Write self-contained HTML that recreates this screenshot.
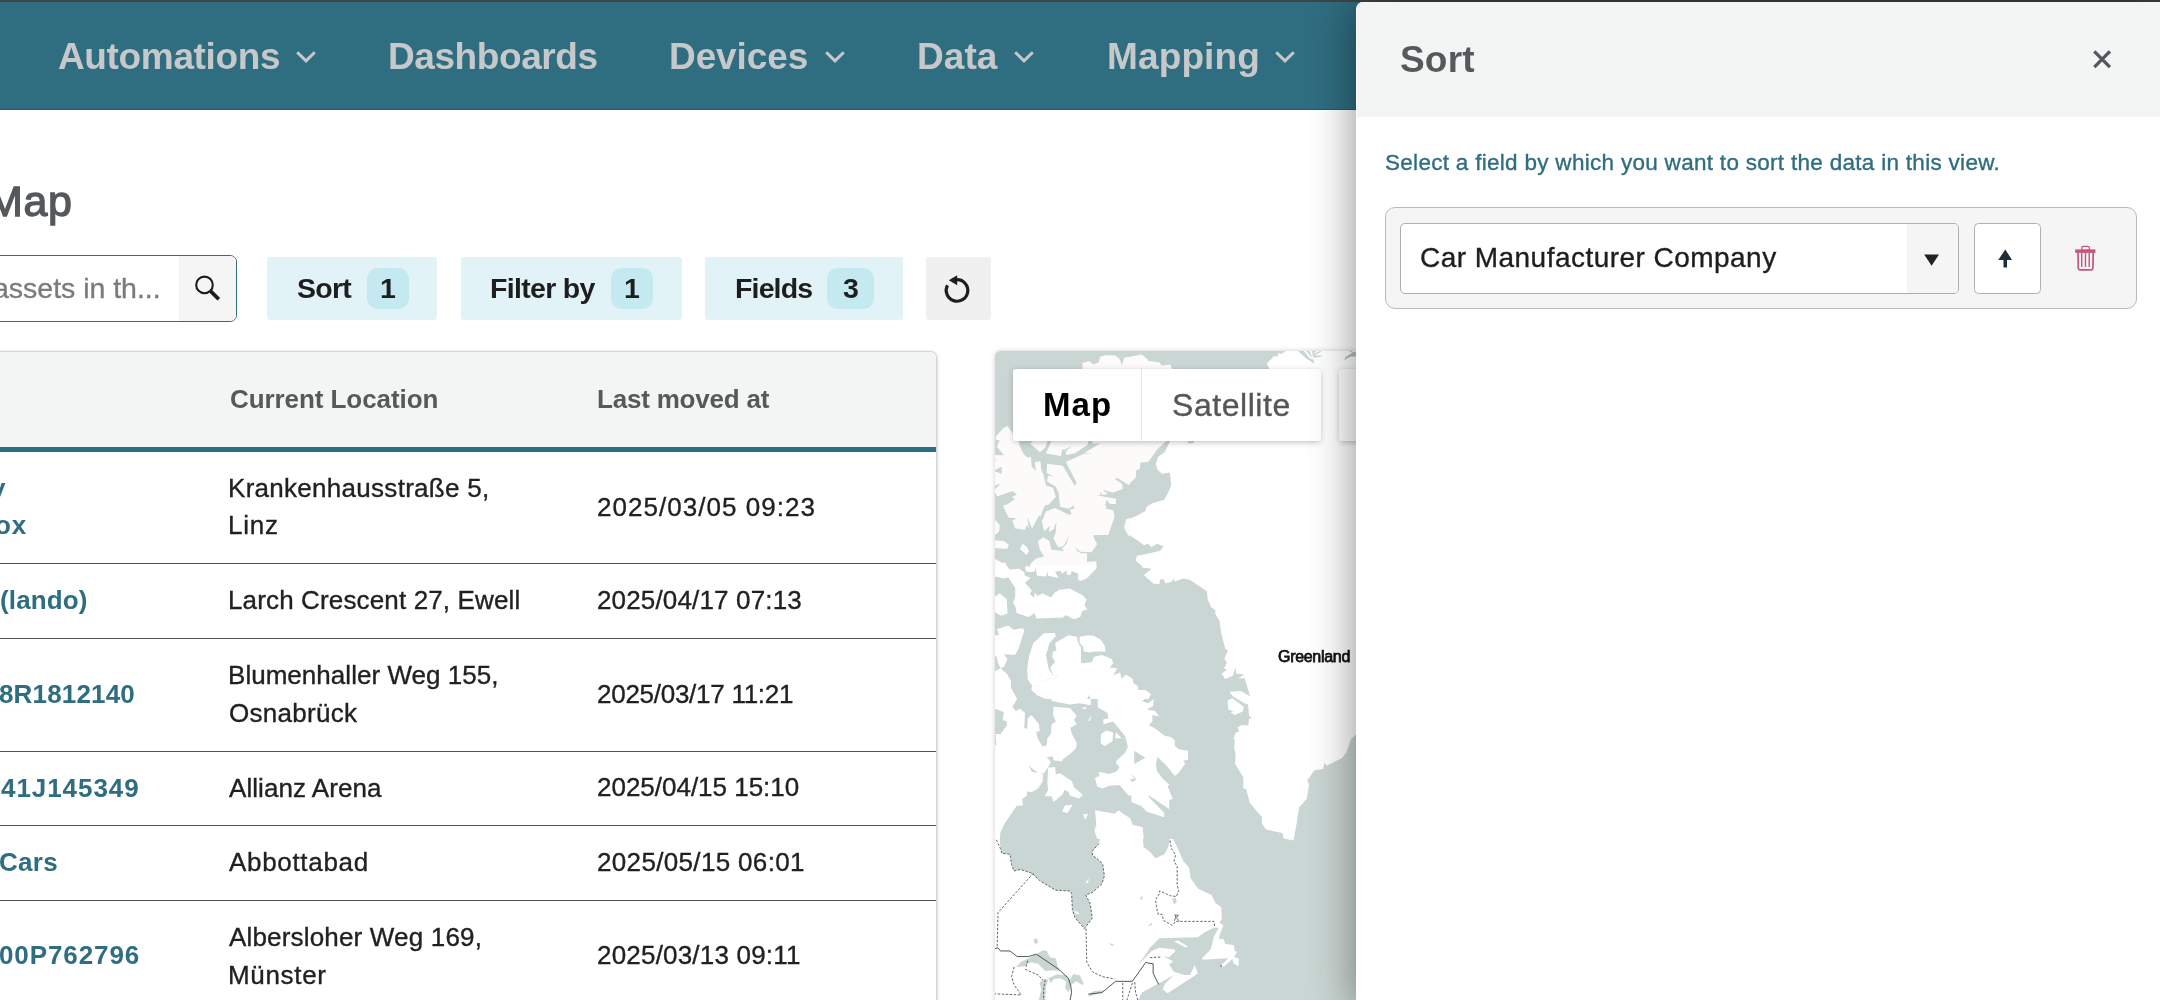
<!DOCTYPE html>
<html>
<head>
<meta charset="utf-8">
<title>Map</title>
<style>
*{box-sizing:border-box;margin:0;padding:0}
html,body{width:2160px;height:1000px;overflow:hidden;background:#fff;font-family:"Liberation Sans",sans-serif;}
body{position:relative}
.abs{position:absolute}
.t{position:absolute;white-space:pre;line-height:1;will-change:transform}
#topbar{left:0;top:0;width:2160px;height:2px;background:#3f4447}
#nav{left:0;top:2px;width:2160px;height:108px;background:#2f6d80;border-bottom:1px solid #1f5c6e}
.chev{position:absolute;width:22px;height:16px}
#search{left:-40px;top:255px;width:277px;height:67px;border:1.4px solid #2f6d80;border-radius:7px;background:#fff;overflow:hidden}
#searchbtn{left:217.5px;top:0;width:58px;height:66px;background:#f5f5f5}
.btn{position:absolute;top:257px;height:63px;background:#e2f3f8;border-radius:3px}
.badge{position:absolute;top:11px;height:41px;background:#c5e9f1;border-radius:11px}
#table{left:-10px;top:351px;width:946.8px;height:700px;border:1px solid #d4d6d6;border-radius:0 7px 0 0;background:#fff;box-shadow:1px 0 3px rgba(0,0,0,.13);overflow:hidden}
#thead{left:0;top:0;width:947px;height:96px;background:#f3f5f5}
#tline{left:0;top:95.3px;width:947px;height:4.4px;background:#2f6d80}
.hr{position:absolute;left:0;width:947px;height:1.2px;background:#505354}
#map{left:994.6px;top:351.2px;width:420px;height:660px;background:#cad6d3;border-radius:6px 0 0 0;overflow:hidden;box-shadow:0 0 5px rgba(0,0,0,.2)}
#mapedge{display:none}
#mapctl{left:1013px;top:369px;width:308px;height:71.5px;background:#fff;border-radius:3px;box-shadow:0 1.5px 6px -1px rgba(0,0,0,.28)}
#mapctl2{left:1339px;top:369px;width:80px;height:71.5px;background:#fff;border-radius:3px;box-shadow:0 1.5px 6px -1px rgba(0,0,0,.28)}
#mapdiv{left:1140.5px;top:369px;width:1.5px;height:71.5px;background:#e6e6e6}
#panel{left:1356px;top:2px;width:820px;height:1010px;background:#fff;border-radius:7px 0 0 0;box-shadow:0 0 46px rgba(0,0,0,.45);border-left:1px solid #fff}
#phead{left:0;top:0;width:820px;height:114.7px;background:#f3f5f5;border-radius:6px 0 0 0}
#card{left:1385px;top:207px;width:752px;height:102px;background:#f5f5f5;border:1.2px solid #b9b9b9;border-radius:10px}
#sel{left:1400px;top:223px;width:559px;height:71px;background:#fff;border:1px solid #aeaeae;border-radius:5px;overflow:hidden}
#selarrow{left:506px;top:0;width:53px;height:70px;background:#f5f5f5}
#upbtn{left:1974px;top:223px;width:67px;height:71px;background:#fff;border:1px solid #b0b0b0;border-radius:4.5px}
</style>
</head>
<body>
<div id="nav" class="abs">
  <svg class="chev" style="left:294.6px;top:46.7px" viewBox="0 0 22 16"><path d="M2.2 3.2 L11 11.9 L19.8 3.2" fill="none" stroke="#c6c8ca" stroke-width="3"/></svg>
  <svg class="chev" style="left:824.1px;top:46.7px" viewBox="0 0 22 16"><path d="M2.2 3.2 L11 11.9 L19.8 3.2" fill="none" stroke="#c6c8ca" stroke-width="3"/></svg>
  <svg class="chev" style="left:1013.1px;top:46.7px" viewBox="0 0 22 16"><path d="M2.2 3.2 L11 11.9 L19.8 3.2" fill="none" stroke="#c6c8ca" stroke-width="3"/></svg>
  <svg class="chev" style="left:1274.1px;top:46.7px" viewBox="0 0 22 16"><path d="M2.2 3.2 L11 11.9 L19.8 3.2" fill="none" stroke="#c6c8ca" stroke-width="3"/></svg>
</div>
<div id="topbar" class="abs"></div>

<div id="search" class="abs">
  <div id="searchbtn" class="abs">
    <svg class="abs" style="left:14px;top:17px" width="34" height="34" viewBox="0 0 34 34"><circle cx="11.5" cy="11.9" r="8.3" fill="none" stroke="#1c1c1c" stroke-width="2.1"/><path d="M17.6 18.1 L25.8 26.3" stroke="#1c1c1c" stroke-width="3.7"/></svg>
  </div>
</div>

<div class="btn" style="left:267px;width:170px"><div class="badge" style="left:100px;width:42px"></div></div>
<div class="btn" style="left:461px;width:221px"><div class="badge" style="left:150px;width:42px"></div></div>
<div class="btn" style="left:705px;width:198px"><div class="badge" style="left:122px;width:47px"></div></div>
<div class="btn" style="left:926.2px;width:64.6px;background:#f0f0f0">
  <svg class="abs" style="left:14.4px;top:15px" width="32" height="34" viewBox="0 0 32 34"><path d="M16 7.6 A10.8 10.8 0 1 1 6.46 13.33" fill="none" stroke="#1e1e1e" stroke-width="3.2"/><path d="M7.8 8.2 L16.2 3.2 L16.2 13.2 Z" fill="#1e1e1e"/></svg>
</div>

<div id="table" class="abs">
  <div id="thead" class="abs"></div>
  <div id="tline" class="abs"></div>
  <div class="hr" style="top:210.9px"></div>
  <div class="hr" style="top:285.9px"></div>
  <div class="hr" style="top:398.9px"></div>
  <div class="hr" style="top:472.7px"></div>
  <div class="hr" style="top:547.9px"></div>
</div>

<div id="map" class="abs"><svg class="abs" style="left:0;top:0" width="420" height="660" viewBox="0 0 420 660"><clipPath id="c1"><rect x="0" y="0" width="405" height="89"/></clipPath><g clip-path="url(#c1)"><rect x="0" y="0" width="405" height="89" fill="#cad6d3"/><g transform="translate(-5,-2) scale(0.21997)"><polygon points="420,100 420,65 450,55 470,70 495,60 500,35 520,28 570,30 590,45 600,75 610,40 690,25 715,45 720,55 770,60 780,75 820,70 830,100" fill="#fcfbfa" /><polygon points="1258,100 1258,65 1285,42 1310,35 1335,8 1345,0 1700,0 1700,420 1258,420" fill="#ffffff" /><polyline points="1395,8 1440,35 1480,50" fill="none" stroke="#cad6d3" stroke-width="8"/><polyline points="1500,8 1455,30 1425,28" fill="none" stroke="#cad6d3" stroke-width="6"/><polyline points="1440,8 1470,40" fill="none" stroke="#cad6d3" stroke-width="5"/><polyline points="1612,45 1665,18" fill="none" stroke="#cad6d3" stroke-width="7"/><polygon points="60,360 80,350 105,385 110,420 30,420 25,400" fill="#fcfbfa" /></g></g><clipPath id="c2"><rect x="135" y="89" width="132" height="125"/></clipPath><g clip-path="url(#c2)"><rect x="135" y="89" width="132" height="125" fill="#ffffff"/><g transform="translate(-5,78) scale(0.13998)"><polygon points="690,-20 1300,-20 1290,60 1200,140 1130,235 1075,240 1070,285 1045,295 1040,350 990,395 945,380 890,352 945,395 950,425 885,455 830,440 790,440 800,470 760,475 900,495 900,540 830,510 830,570 880,575 890,620 840,755 740,760 765,820 730,880 695,885 695,945 760,950 765,1010 690,1010" fill="#fcfbfa" /><polygon points="1290,60 1200,140 1130,235 1075,240 1070,285 1045,295 1040,350 990,395 945,380 890,352 945,395 950,425 885,455 830,440 790,440 800,470 760,475 900,495 900,540 830,510 830,570 880,575 890,620 840,755 740,760 765,820 730,880 695,885 695,945 760,950 765,1010 1150,1010 1080,975 1040,940 1050,905 1110,895 1215,870 1240,840 1195,820 1150,845 1130,820 1100,830 1060,800 1000,760 960,710 970,650 1050,620 1110,585 1120,555 1160,530 1245,505 1280,440 1295,400 1285,310 1230,320 1195,290 1185,250 1200,200 1250,165 1280,100 1300,60" fill="#cad6d3" /><polygon points="1405,78 1460,78 1455,100 1420,105" fill="#cad6d3" /></g></g><clipPath id="c3"><rect x="0" y="89" width="135" height="65"/></clipPath><g clip-path="url(#c3)"><rect x="0" y="89" width="135" height="65" fill="#fcfbfa"/><g transform="translate(-5,84) scale(0.07000)"><polygon points="405,60 630,60 575,125 715,245 790,180 830,60 885,60 850,150 795,265 1015,300 1030,200 1065,215 1170,150 1085,235 1085,285 1210,265 1395,135 1410,60 1440,60 1475,125 1580,115 1355,255 1480,275 1350,265 1085,385 1240,690 1210,725 1040,440 815,410 810,540 910,595 830,580 815,660 935,735 980,820 1000,1010 820,1010 940,885 900,755 800,720 770,590 730,480 720,375 640,390 655,515 595,450 585,310 535,325 480,270 430,170" fill="#cad6d3" /><polygon points="70,-10 280,-10 260,30 215,50 150,35 100,170 200,290 70,285" fill="#cad6d3" /><polygon points="70,350 85,355 70,380" fill="#cad6d3" /><polygon points="70,500 165,455 170,555 70,520" fill="#cad6d3" /><polygon points="70,720 150,700 70,775" fill="#cad6d3" /><polygon points="70,810 100,880 320,800 385,850 310,890 360,915 215,1010 70,1010" fill="#cad6d3" /><polygon points="2010,700 1975,710 1820,615 1780,625 1890,700 1895,770 1750,825 1640,790 1610,795 1680,830 1660,850 1600,855 1580,800 1575,860 1515,862 1800,910 1800,985 1715,985 1660,930 1655,990 1560,1010 2010,1010" fill="#cad6d3" /></g></g><clipPath id="c4"><rect x="0" y="154" width="135" height="60"/></clipPath><g clip-path="url(#c4)"><rect x="0" y="154" width="135" height="60" fill="#fcfbfa"/><g transform="translate(-5,148) scale(0.07000)"><polygon points="910,-10 990,-10 1000,110 1130,140 1190,90 1210,135 1140,150 1165,210 1130,230 935,130 800,180 740,320 775,460 855,385 840,475 910,430 950,320 940,480 905,560 975,690 1040,680 1080,625 1130,510 1095,640 1050,690 1025,710 1060,745 875,720 850,600 760,545 685,605 710,720 775,820 660,850 580,920 570,1010 560,960 520,945 490,1010 270,1010 215,905 185,915 70,855 70,700 245,715 270,655 200,600 70,590 70,520 130,460 140,370 70,295 70,-10 360,-10 185,100 265,265 380,275 320,310 360,420 500,440 525,370 555,420 530,250 545,290 600,420 700,235 720,250 770,120 780,100" fill="#cad6d3" /><polygon points="430,715 465,640 530,690 555,750 520,800" fill="#ffffff" /><polygon points="1800,-10 2010,-10 2010,270 1945,290 1915,410 1975,520 2010,530 2010,1010 1520,1010 1520,890 1385,895 1385,775 1300,775 1250,745 1215,690 1290,755 1450,760 1530,645 1480,545 1485,515 1690,515 1780,250 1760,160 1655,140 1660,20 1740,75 1795,70" fill="#cad6d3" /><polygon points="1530,70 1660,62 1655,88 1530,80" fill="#cad6d3" /></g></g><clipPath id="c5"><rect x="0" y="214" width="267" height="134"/></clipPath><g clip-path="url(#c5)"><rect x="0" y="214" width="267" height="134" fill="#cad6d3"/><g transform="translate(-5,208) scale(0.13998)"><polygon points="35,10 100,25 140,75 205,70 245,95 250,120 290,135 250,170 300,225 285,250 315,275 320,240 340,265 375,245 435,275 465,240 495,220 570,210 665,260 690,290 675,330 695,360 660,370 645,415 600,430 540,400 520,420 470,420 330,425 320,385 275,415 190,385 180,335 165,315 180,270 180,205 130,130 100,140 35,125" fill="#ffffff" /><polygon points="285,-10 285,60 265,45 250,60 255,85 280,95 320,90 325,55 335,120 400,125 410,90 415,120 490,135 465,90 505,85 515,105 545,80 550,110 575,115 585,85 630,105 630,150 650,157 690,140 760,70 765,20 700,15 695,-10" fill="#ffffff" /><polygon points="35,270 70,245 120,290 125,390 80,405 35,380" fill="#ffffff" /><polygon points="35,545 65,545 50,500 130,475 170,505 235,495 245,510 205,640 180,685 100,680 125,715 100,770 75,780 55,740 50,700 35,690" fill="#ffffff" /><polygon points="35,800 75,780 120,820 150,870 150,920 200,1010 35,1010" fill="#ffffff" /><polygon points="385,530 465,528 470,550 425,600 400,690 420,790 450,830 485,825 480,855 455,850 350,875 350,910 300,905 270,860 265,790 280,690 310,600" fill="#ffffff" /><polygon points="465,600 560,545 620,555 630,600 650,630 650,740 665,745 730,735 740,700 800,685 870,715 880,745 855,775 910,780 880,830 930,810 940,855 970,825 1020,855 1025,890 1055,905 1060,935 1110,935 1150,965 1130,1010 720,1010 710,970 690,1010 420,1010 340,975 295,935 300,905 350,910 350,875 455,850 480,855 485,825 450,830 430,775 465,735 445,700 450,660 475,655" fill="#ffffff" /><polygon points="640,555 700,545 740,548 790,575 820,620 825,660 740,660 715,668 670,660 665,625 640,600" fill="#ffffff" /><polygon points="1035,-10 1050,40 1080,25 1085,60 1155,70 1100,115 1165,175 1210,180 1215,145 1240,145 1255,175 1300,160 1310,140 1320,160 1380,140 1430,150 1550,230 1555,290 1580,345 1610,365 1610,395 1640,440 1650,520 1670,600 1680,640 1700,655 1670,720 1690,745 1665,790 1690,790 1655,820 1680,855 1730,835 1755,780 1760,830 1815,825 1775,850 1820,850 1860,985 1790,965 1715,950 1740,985 1800,1010 1950,1010 1950,-10" fill="#ffffff" /></g></g><clipPath id="c6"><rect x="0" y="348" width="267" height="140"/></clipPath><g clip-path="url(#c6)"><rect x="0" y="348" width="267" height="140" fill="#cad6d3"/><g transform="translate(-5,348) scale(0.13998)"><polygon points="35,-10 200,-10 160,55 185,85 215,70 250,100 245,205 265,215 270,140 295,115 350,180 355,230 330,235 340,280 375,340 405,330 410,280 435,250 440,180 470,160 450,110 455,55 570,65 620,120 600,150 620,180 575,205 585,250 620,315 615,350 570,395 520,430 515,445 455,440 450,410 405,415 435,450 410,495 385,530 345,530 275,475 300,520 380,535 375,590 345,640 300,665 265,660 265,690 230,715 235,760 190,765 110,880 75,950 70,1010 35,1010" fill="#ffffff" /><polygon points="35,70 100,95 90,150 120,160 120,190 75,250 40,250 45,330 35,330" fill="#cad6d3" /><polygon points="185,95 185,135 155,135" fill="#ffffff" /><polygon points="415,490 465,485 470,540 500,530 585,585 600,630 665,685 635,710 570,690 560,660 530,650 520,680 455,735 440,695 390,695 415,650 410,600" fill="#ffffff" /><polygon points="535,760 590,755 555,815 515,805" fill="#ffffff" /><polygon points="665,825 700,820 680,865" fill="#ffffff" /><polygon points="440,-10 440,15 570,40 640,30 720,45 720,-10" fill="#ffffff" /><polygon points="650,60 690,60 680,75" fill="#ffffff" /><polygon points="770,-10 770,60 840,100 845,140 810,145 810,180 880,160 965,265 985,340 965,385 905,440 900,455 925,490 900,520 850,535 780,520 780,550 750,565 765,625 805,640 850,620 925,615 990,690 1010,690 1010,735 1080,765 1120,805 1245,845 1245,815 1130,695 1135,690 1280,785 1280,720 1305,715 1270,625 1280,610 1230,565 1195,520 1185,475 1195,415 1260,475 1320,550 1350,525 1395,460 1380,440 1415,435 1415,370 1355,360 1320,335 1320,295 1290,270 1250,265 1185,215 1135,185 1160,160 1160,115 1210,125 1180,85 1120,75 1165,50 1170,0 1130,30 1085,15 1120,-10" fill="#ffffff" /><polygon points="1030,370 1110,420 1030,465" fill="#cad6d3" /><polygon points="1010,530 1045,575 1015,595 1000,575 1030,570" fill="#cad6d3" /><polygon points="795,250 830,225 880,240 875,300 820,337 790,315" fill="#ffffff" /><polygon points="900,235 940,280 895,280" fill="#ffffff" /><polygon points="725,115 715,155 700,155" fill="#ffffff" /><polygon points="750,795 890,820 920,795 950,820 1000,850 1020,900 1090,915 1100,1010 770,1010 745,940 760,900" fill="#ffffff" /><polygon points="1950,-10 1870,-10 1870,35 1850,30 1860,80 1845,190 1775,205 1780,235 1750,250 1745,350 1755,395 1750,460 1810,560 1810,640 1830,645 1855,740 1895,790 1950,850" fill="#ffffff" /><polygon points="1700,-10 1760,-5 1815,45 1810,90 1745,115 1700,70" fill="#ffffff" /></g></g><clipPath id="c7"><rect x="0" y="488" width="267" height="161"/></clipPath><g clip-path="url(#c7)"><rect x="0" y="488" width="267" height="161" fill="#ffffff"/><g transform="translate(-5,488) scale(0.15995)"><polygon points="60,-10 65,60 75,90 125,95 135,160 150,200 190,190 265,215 310,260 410,320 500,325 510,340 515,440 530,490 590,560 640,495 625,400 598,350 640,335 700,280 715,230 705,160 690,140 640,100 640,75 680,30 690,-10" fill="#cad6d3" /><polygon points="598,275 618,245 612,275" fill="#ffffff" /><polygon points="525,450 550,455 560,470 530,465" fill="#ffffff" /><polygon points="955,-10 960,50 1000,80 1035,120 1090,95 1115,50 1125,-10" fill="#cad6d3" /><polygon points="1140,-10 1165,40 1210,140 1245,180 1255,245 1300,310 1340,330 1385,350 1410,400 1445,425 1450,500 1435,525 1460,540 1440,590 1430,625 1460,625 1470,655 1525,665 1530,700 1545,705 1525,740 1555,745 1555,795 1525,780 1515,750 1465,795 1445,800 1440,785 1455,780 1490,745 1330,755 1325,745 1380,690 1400,610 1430,555 1400,555 1340,585 1300,615 1060,620 1000,680 960,740 925,790 1010,700 1060,680 1150,690 1160,700 1120,740 1085,735 1145,765 1120,785 1150,830 1215,850 1250,850 1280,790 1300,840 1265,865 1110,965 1080,940 1095,905 1150,850 1080,890 950,960 925,1010 1900,1010 1900,-10" fill="#cad6d3" /><polygon points="1150,640 1175,635 1235,670 1225,680" fill="#ffffff" /><polygon points="165,800 190,770 240,745 290,720 330,695 355,700 375,740 410,745 425,800 440,825 395,820 345,825 300,780 255,770 215,795" fill="#cad6d3" /><polygon points="310,900 330,875 365,880 350,920 345,1010 305,1010 320,940" fill="#cad6d3" /><polygon points="365,870 420,845 480,855 500,880 520,845 560,850 585,900 580,915 540,890 510,910 490,960 470,930 475,890 440,870 400,875 380,900" fill="#cad6d3" /><polygon points="615,970 650,950 720,945 700,960 620,985" fill="#cad6d3" /><polygon points="270,630 295,620 300,650 280,655" fill="#cad6d3" /><polyline points="40,5 65,60 75,90 125,95 135,160 150,200 190,190 265,215 310,260 410,320 500,325 510,340 515,440 530,490 590,560 640,495 625,400 598,350 640,335 700,280 715,230 705,160 690,140 640,100 640,75 680,30" fill="none" stroke="#5a5f60" stroke-width="6" stroke-dasharray="15 10"/><polyline points="270,215 50,460 45,670" fill="none" stroke="#5a5f60" stroke-width="6" stroke-dasharray="15 10"/><polyline points="600,560 605,770 640,830 700,860 780,875" fill="none" stroke="#5a5f60" stroke-width="6" stroke-dasharray="15 10"/><polyline points="1125,10 1135,60 1160,100 1150,140 1170,170 1170,290 1180,320 1165,360 1130,355 1060,325 1060,340 1035,380 1040,420 1050,470 1075,470 1085,510 1140,540 1160,515 1400,515 1405,550" fill="none" stroke="#5a5f60" stroke-width="6" stroke-dasharray="15 10"/><polyline points="1000,742 1065,738" fill="none" stroke="#5a5f60" stroke-width="6" stroke-dasharray="15 10"/><polyline points="150,800 135,860 150,910 195,975 30,968" fill="none" stroke="#5a5f60" stroke-width="6" stroke-dasharray="15 10"/><polyline points="220,815 300,850 330,880" fill="none" stroke="#5a5f60" stroke-width="6" stroke-dasharray="15 10"/><polyline points="235,760 225,800" fill="none" stroke="#5a5f60" stroke-width="6" stroke-dasharray="15 10"/><polyline points="830,900 830,1010" fill="none" stroke="#5a5f60" stroke-width="6" stroke-dasharray="15 10"/><polyline points="905,895 910,960 925,1010" fill="none" stroke="#5a5f60" stroke-width="6" stroke-dasharray="15 10"/><polyline points="890,900 855,1010" fill="none" stroke="#5a5f60" stroke-width="6" stroke-dasharray="15 10"/><polyline points="345,880 335,940 335,1010" fill="none" stroke="#5a5f60" stroke-width="6" stroke-dasharray="15 10"/><polyline points="30,685 50,680 65,700 125,700 170,735 240,735 290,720 430,815 440,825 490,870 505,920 510,960 500,1010" fill="none" stroke="#4a4f50" stroke-width="6"/><polyline points="615,970 700,960 785,890 890,890 975,770 985,775 1020,780 1020,840 1055,910" fill="none" stroke="#4a4f50" stroke-width="6"/><polyline points="1445,785 1445,800" fill="none" stroke="#4a4f50" stroke-width="6"/><polygon points="1140,375 1160,365 1168,395 1150,410" fill="#cad6d3" /><polygon points="935,372 955,355 950,382" fill="#cad6d3" /><polygon points="985,545 1015,522 1010,540" fill="#cad6d3" /><polygon points="740,648 780,662 760,668" fill="#cad6d3" /><polyline points="1152,512 1162,488 1156,474 1178,478 1164,490 1182,512" fill="none" stroke="#4a4f50" stroke-width="5"/></g></g><clipPath id="c8"><rect x="267" y="89" width="138" height="339"/></clipPath><g clip-path="url(#c8)"><rect x="267" y="89" width="138" height="339" fill="#ffffff"/><g transform="translate(-5,208) scale(0.21997)"><polygon points="1660,800 1640,820 1620,880 1600,905 1530,940 1520,925 1515,955 1475,960 1440,1010 1900,1010 1900,800" fill="#cad6d3" /></g></g><clipPath id="c9"><rect x="267" y="428" width="138" height="221"/></clipPath><g clip-path="url(#c9)"><rect x="267" y="428" width="138" height="221" fill="#cad6d3"/><g transform="translate(-5,428) scale(0.21997)"><polygon points="1150,-10 1155,40 1175,30 1195,100 1215,130 1225,185 1255,230 1330,245 1335,270 1380,280 1395,195 1405,130 1440,90 1450,30 1440,-10" fill="#ffffff" /></g></g><clipPath id="c10"><rect x="255" y="0" width="150" height="18"/></clipPath><g clip-path="url(#c10)"><rect x="255" y="0" width="150" height="18" fill="#ffffff"/><g transform="translate(255,-7) scale(0.10496)"><polygon points="-10,40 350,40 350,60 300,95 270,85 265,120 230,115 160,185 185,240 -10,240" fill="#cad6d3" /><polygon points="445,58 505,58 570,135 605,150 612,188 585,170 540,140" fill="#cad6d3" /><polygon points="528,58 562,58 600,140 585,125" fill="#cad6d3" /><polygon points="590,58 640,58 600,98 668,66 682,72 612,108 684,112 684,122 606,128 596,100" fill="#cad6d3" /><polygon points="898,160 910,125 955,95 1010,72 1010,118 960,118 925,135" fill="#b4c2be" /><polygon points="930,58 950,58 1010,92 1010,105" fill="#b4c2be" /></g></g><clipPath id="c11"><rect x="205" y="308" width="100" height="80"/></clipPath><g clip-path="url(#c11)"><rect x="205" y="308" width="100" height="80" fill="#cad6d3"/><g transform="translate(205,308) scale(0.08000)"><polygon points="300,-10 335,45 300,120 340,130 270,185 315,250 410,210 445,100 450,185 555,190 475,245 560,240 625,465 510,400 370,410 410,465 560,555 600,565 612,700 650,750 612,740 605,830 520,825 470,855 490,905 445,920 415,1010 2010,1010 2010,-10" fill="#ffffff" /><polygon points="345,515 405,490 550,600 530,660 430,700 385,665 420,655 355,630" fill="#ffffff" /></g></g></svg></div>
<div id="mapedge" class="abs"></div>
<div id="mapctl" class="abs"></div>
<div id="mapdiv" class="abs"></div>
<div id="mapctl2" class="abs"></div>
<span class="t" id="n1" style="left:57.5px;top:38.011px;font-size:37px;color:#c6c8ca;font-weight:bold;letter-spacing:-0.352px;">Automations</span>
<span class="t" id="n2" style="left:388px;top:38.011px;font-size:37px;color:#c6c8ca;font-weight:bold;letter-spacing:-0.417px;">Dashboards</span>
<span class="t" id="n3" style="left:669.25px;top:38.011px;font-size:37px;color:#c6c8ca;font-weight:bold;letter-spacing:-0.093px;">Devices</span>
<span class="t" id="n4" style="left:916.75px;top:38.011px;font-size:37px;color:#c6c8ca;font-weight:bold;letter-spacing:0.044px;">Data</span>
<span class="t" id="n5" style="left:1106.75px;top:38.011px;font-size:37px;color:#c6c8ca;font-weight:bold;letter-spacing:0.128px;">Mapping</span>
<span class="t" id="title" style="left:-12.68px;top:180.006px;font-size:43px;color:#54585b;letter-spacing:0.6px;-webkit-text-stroke:1.3px #54585b;">Map</span>
<span class="t" id="ph" style="left:-7px;top:274.011px;font-size:28.5px;color:#7b7b7b;letter-spacing:-0.017px;-webkit-text-stroke:0.35px #7b7b7b;">assets in th...</span>
<span class="t" id="b1" style="left:296.75px;top:274.011px;font-size:28.5px;color:#1e1e1e;font-weight:bold;letter-spacing:-0.753px;">Sort</span>
<span class="t" id="b1n" style="left:379.5px;top:274.011px;font-size:28.5px;color:#1e1e1e;font-weight:bold;">1</span>
<span class="t" id="b2" style="left:490.25px;top:274.011px;font-size:28.5px;color:#1e1e1e;font-weight:bold;letter-spacing:-0.688px;">Filter by</span>
<span class="t" id="b2n" style="left:623.75px;top:274.011px;font-size:28.5px;color:#1e1e1e;font-weight:bold;">1</span>
<span class="t" id="b3" style="left:734.75px;top:274.011px;font-size:28.5px;color:#1e1e1e;font-weight:bold;letter-spacing:-0.851px;">Fields</span>
<span class="t" id="b3n" style="left:843px;top:274.011px;font-size:28.5px;color:#1e1e1e;font-weight:bold;">3</span>
<span class="t" id="h1" style="left:229.5px;top:386.006px;font-size:26px;color:#55595c;font-weight:bold;letter-spacing:-0.071px;">Current Location</span>
<span class="t" id="h2" style="left:597.25px;top:386.006px;font-size:26px;color:#55595c;font-weight:bold;letter-spacing:-0.202px;">Last moved at</span>
<span class="t" id="r1a" style="left:228px;top:475.006px;font-size:26px;color:#212121;letter-spacing:0.285px;-webkit-text-stroke:0.35px #212121;">Krankenhausstraße 5,</span>
<span class="t" id="r1b" style="left:228px;top:512.006px;font-size:26px;color:#212121;letter-spacing:0.768px;-webkit-text-stroke:0.35px #212121;">Linz</span>
<span class="t" id="r1d" style="left:597px;top:494.006px;font-size:26px;color:#212121;letter-spacing:1.036px;-webkit-text-stroke:0.35px #212121;">2025/03/05 09:23</span>
<span class="t" id="r2a" style="left:228px;top:587.006px;font-size:26px;color:#212121;letter-spacing:0.142px;-webkit-text-stroke:0.35px #212121;">Larch Crescent 27, Ewell</span>
<span class="t" id="r2d" style="left:597px;top:587.006px;font-size:26px;color:#212121;letter-spacing:0.153px;-webkit-text-stroke:0.35px #212121;">2025/04/17 07:13</span>
<span class="t" id="r3a" style="left:228px;top:662.006px;font-size:26px;color:#212121;letter-spacing:0.034px;-webkit-text-stroke:0.35px #212121;">Blumenhaller Weg 155,</span>
<span class="t" id="r3b" style="left:229px;top:700.006px;font-size:26px;color:#212121;letter-spacing:0.285px;-webkit-text-stroke:0.35px #212121;">Osnabrück</span>
<span class="t" id="r3d" style="left:597px;top:681.006px;font-size:26px;color:#212121;letter-spacing:-0.268px;-webkit-text-stroke:0.35px #212121;">2025/03/17 11:21</span>
<span class="t" id="r4a" style="left:229.3px;top:775.006px;font-size:26px;color:#212121;letter-spacing:0.06px;-webkit-text-stroke:0.35px #212121;">Allianz Arena</span>
<span class="t" id="r4d" style="left:597px;top:774.006px;font-size:26px;color:#212121;letter-spacing:-0.014px;-webkit-text-stroke:0.35px #212121;">2025/04/15 15:10</span>
<span class="t" id="r5a" style="left:229.3px;top:849.006px;font-size:26px;color:#212121;letter-spacing:0.683px;-webkit-text-stroke:0.35px #212121;">Abbottabad</span>
<span class="t" id="r5d" style="left:597px;top:849.006px;font-size:26px;color:#212121;letter-spacing:0.336px;-webkit-text-stroke:0.35px #212121;">2025/05/15 06:01</span>
<span class="t" id="r6a" style="left:229.3px;top:924.006px;font-size:26px;color:#212121;letter-spacing:0.177px;-webkit-text-stroke:0.35px #212121;">Albersloher Weg 169,</span>
<span class="t" id="r6b" style="left:228px;top:962.006px;font-size:26px;color:#212121;letter-spacing:0.665px;-webkit-text-stroke:0.35px #212121;">Münster</span>
<span class="t" id="r6d" style="left:597px;top:942.006px;font-size:26px;color:#212121;letter-spacing:0.198px;-webkit-text-stroke:0.35px #212121;">2025/03/13 09:11</span>
<span class="t" id="l1a" style="left:-9.0px;top:475.006px;font-size:26px;color:#2f6d80;font-weight:bold;letter-spacing:0.9px;">y</span>
<span class="t" id="l1b" style="left:-4.78px;top:512.006px;font-size:26px;color:#2f6d80;font-weight:bold;letter-spacing:0.9px;">ox</span>
<span class="t" id="l2" style="left:-0.5px;top:587.006px;font-size:26px;color:#2f6d80;font-weight:bold;letter-spacing:0.127px;">(lando)</span>
<span class="t" id="l3" style="left:-1px;top:681.006px;font-size:26px;color:#2f6d80;font-weight:bold;letter-spacing:0.157px;">8R1812140</span>
<span class="t" id="l4" style="left:1px;top:775.006px;font-size:26px;color:#2f6d80;font-weight:bold;letter-spacing:0.946px;">41J145349</span>
<span class="t" id="l5" style="left:-1.5px;top:849.006px;font-size:26px;color:#2f6d80;font-weight:bold;letter-spacing:0.299px;">Cars</span>
<span class="t" id="l6" style="left:-1.01px;top:942.006px;font-size:26px;color:#2f6d80;font-weight:bold;letter-spacing:0.9px;">00P762796</span>
<span class="t" id="mc1" style="left:1043px;top:388.001px;font-size:33px;color:#000;font-weight:bold;letter-spacing:1.029px;">Map</span>
<span class="t" id="mc2" style="left:1172.2px;top:389.013px;font-size:32px;color:#565656;letter-spacing:0.544px;-webkit-text-stroke:0.35px #565656;">Satellite</span>
<span class="t" id="gl" style="left:1277.7px;top:649.01px;font-size:16px;color:#111;letter-spacing:-0.303px;-webkit-text-stroke:0.75px #111;text-shadow:0 0 2px #fff,0 0 2px #fff,0 0 3px #fff;">Greenland</span>

<div id="panel" class="abs">
  <div id="phead" class="abs"></div>
</div>
<svg class="abs" style="left:2091px;top:48px" width="22" height="22" viewBox="0 0 22 22"><path d="M3.3 3.45 L18.9 19.05 M18.9 3.45 L3.3 19.05" stroke="#54585a" stroke-width="3.3"/></svg>
<div id="card" class="abs"></div>
<div id="sel" class="abs">
  <div id="selarrow" class="abs"><svg class="abs" style="left:16.5px;top:29.5px" width="16" height="13" viewBox="0 0 16 13"><path d="M0.2 0.5 L15 0.5 L7.6 11.8 Z" fill="#1f2326"/></svg></div>
</div>
<div id="upbtn" class="abs"></div>
<svg class="abs" style="left:1996px;top:247px" width="18" height="22" viewBox="0 0 18 22"><path d="M9.3 2.4 L16 12.9 L11 12.9 L11 20.5 L7.5 20.5 L7.5 12.9 L2.3 12.9 Z" fill="#1f2d36"/></svg>
<svg class="abs" style="left:2073px;top:243px" width="26" height="30" viewBox="0 0 26 30">
  <g fill="none" stroke="#c5557b">
    <rect x="8.8" y="3.4" width="7.6" height="4" rx="1.4" stroke-width="1.3"/>
    <path d="M5 10 L5.3 25.3 Q5.4 26.9 7 26.9 L18.2 26.9 Q19.8 26.9 19.9 25.3 L20.2 10" stroke-width="1.7"/>
    <path d="M8.7 10 L8.7 24 M12.5 10 L12.5 24 M16.2 10 L16.2 24" stroke-width="1.4"/>
  </g>
  <rect x="2.2" y="6.4" width="20.2" height="3.5" fill="#c5557b"/>
</svg>
<span class="t" id="pt" style="left:1399.5px;top:41.008px;font-size:37px;color:#55595c;font-weight:bold;letter-spacing:0.19px;">Sort</span>
<span class="t" id="pd" style="left:1384.75px;top:152.012px;font-size:22.5px;color:#2f6d80;letter-spacing:0.293px;-webkit-text-stroke:0.35px #2f6d80;">Select a field by which you want to sort the data in this view.</span>
<span class="t" id="st" style="left:1419.6px;top:244.012px;font-size:28px;color:#1e1e1e;letter-spacing:0.464px;-webkit-text-stroke:0.35px #1e1e1e;">Car Manufacturer Company</span>
</body>
</html>
